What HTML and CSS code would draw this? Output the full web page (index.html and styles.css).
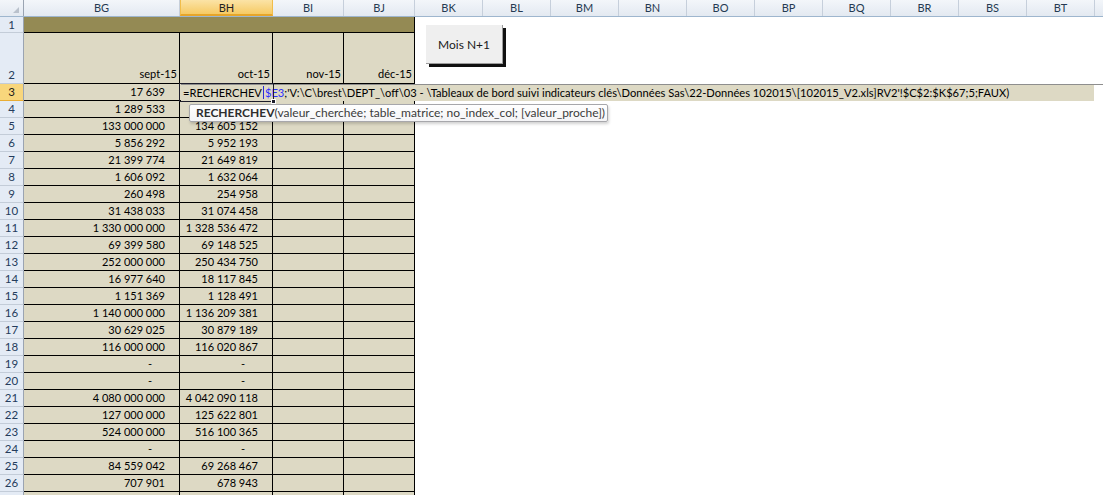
FILE: index.html
```html
<!DOCTYPE html>
<html lang="fr">
<head>
  <meta charset="UTF-8" />
  <title>Classeur - indicateurs</title>
  <link rel="stylesheet" href="styles.css">
</head>
<body>
  <div class="workbook">
    <!-- column letters -->
    <div class="colheads">
      <div class="corner"><svg width="8" height="8" viewBox="0 0 8 8"><path d="M7 1 L7 7 L1 7 Z" fill="#b9c1cc"/></svg></div>
      <div class="ch w-bg">BG</div>
      <div class="ch w-bh active">BH</div>
      <div class="ch w-bi">BI</div>
      <div class="ch w-bj">BJ</div>
      <div class="ch">BK</div>
      <div class="ch">BL</div>
      <div class="ch">BM</div>
      <div class="ch">BN</div>
      <div class="ch">BO</div>
      <div class="ch">BP</div>
      <div class="ch">BQ</div>
      <div class="ch">BR</div>
      <div class="ch">BS</div>
      <div class="ch">BT</div>
      <div class="ch"></div>
    </div>

    <div class="sheet">
      <div class="rh">1</div><div class="band"></div>
      <div class="rh">2</div><div class="c d">sept-15</div><div class="c d">oct-15</div><div class="c d">nov-15</div><div class="c d">déc-15</div>
      <div class="rh sel">3</div><div class="c n">17 639</div><div class="c"></div><div class="c"></div><div class="c"></div>
      <div class="rh">4</div><div class="c n">1 289 533</div><div class="c"></div><div class="c"></div><div class="c"></div>
      <div class="rh">5</div><div class="c n">133 000 000</div><div class="c n">134 605 152</div><div class="c"></div><div class="c"></div>
      <div class="rh">6</div><div class="c n">5 856 292</div><div class="c n">5 952 193</div><div class="c"></div><div class="c"></div>
      <div class="rh">7</div><div class="c n">21 399 774</div><div class="c n">21 649 819</div><div class="c"></div><div class="c"></div>
      <div class="rh">8</div><div class="c n">1 606 092</div><div class="c n">1 632 064</div><div class="c"></div><div class="c"></div>
      <div class="rh">9</div><div class="c n">260 498</div><div class="c n">254 958</div><div class="c"></div><div class="c"></div>
      <div class="rh">10</div><div class="c n">31 438 033</div><div class="c n">31 074 458</div><div class="c"></div><div class="c"></div>
      <div class="rh">11</div><div class="c n">1 330 000 000</div><div class="c n">1 328 536 472</div><div class="c"></div><div class="c"></div>
      <div class="rh">12</div><div class="c n">69 399 580</div><div class="c n">69 148 525</div><div class="c"></div><div class="c"></div>
      <div class="rh">13</div><div class="c n">252 000 000</div><div class="c n">250 434 750</div><div class="c"></div><div class="c"></div>
      <div class="rh">14</div><div class="c n">16 977 640</div><div class="c n">18 117 845</div><div class="c"></div><div class="c"></div>
      <div class="rh">15</div><div class="c n">1 151 369</div><div class="c n">1 128 491</div><div class="c"></div><div class="c"></div>
      <div class="rh">16</div><div class="c n">1 140 000 000</div><div class="c n">1 136 209 381</div><div class="c"></div><div class="c"></div>
      <div class="rh">17</div><div class="c n">30 629 025</div><div class="c n">30 879 189</div><div class="c"></div><div class="c"></div>
      <div class="rh">18</div><div class="c n">116 000 000</div><div class="c n">116 020 867</div><div class="c"></div><div class="c"></div>
      <div class="rh">19</div><div class="c dash">-</div><div class="c dash">-</div><div class="c"></div><div class="c"></div>
      <div class="rh">20</div><div class="c dash">-</div><div class="c dash">-</div><div class="c"></div><div class="c"></div>
      <div class="rh">21</div><div class="c n">4 080 000 000</div><div class="c n">4 042 090 118</div><div class="c"></div><div class="c"></div>
      <div class="rh">22</div><div class="c n">127 000 000</div><div class="c n">125 622 801</div><div class="c"></div><div class="c"></div>
      <div class="rh">23</div><div class="c n">524 000 000</div><div class="c n">516 100 365</div><div class="c"></div><div class="c"></div>
      <div class="rh">24</div><div class="c dash">-</div><div class="c dash">-</div><div class="c"></div><div class="c"></div>
      <div class="rh">25</div><div class="c n">84 559 042</div><div class="c n">69 268 467</div><div class="c"></div><div class="c"></div>
      <div class="rh">26</div><div class="c n">707 901</div><div class="c n">678 943</div><div class="c"></div><div class="c"></div>
      <div class="rh"></div><div class="c"></div><div class="c"></div><div class="c"></div><div class="c"></div>
    </div>

    <!-- floating things over the grid -->
    <button class="macro-btn">Mois N+1</button>

    <div class="editor">=RECHERCHEV<span class="caret"></span><span class="ref">$E3</span>;'V:\C\brest\DEPT_\off\03 - \Tableaux de bord suivi indicateurs clés\Données Sas\22-Données 102015\[102015_V2.xls]RV2'!$C$2:$K$67;5;FAUX)</div>
    <div class="selbox"><span class="handle"></span></div>

    <div class="fn-tip"><b>RECHERCHEV</b>(valeur_cherchée; table_matrice; no_index_col; [valeur_proche])</div>
  </div>
</body>
</html>
```

FILE: styles.css
```css
* {
  margin: 0;
  padding: 0;
  box-sizing: border-box;
}

html, body {
  height: 100%;
  background: #ffffff;
  overflow: hidden;
  font-family: 'Lato', 'Liberation Sans', sans-serif;
  font-size: 11px;
  color: #000;
}

.workbook {
  position: relative;
  width: 1103px;
  height: 495px;
  overflow: hidden;
}

/* Column header strip */
.colheads {
  display: flex;
  height: 17px;
  background: linear-gradient(#f3f6fa, #e3e9f1);
  border-bottom: 1px solid #9eb6ce;
}

.corner {
  flex: 0 0 24px;
  border-right: 1px solid #9aa4b2;
  display: flex;
  align-items: flex-end;
  justify-content: flex-end;
  padding: 0 3px 2px 0;
}

.ch {
  flex: 0 0 68px;
  border-right: 1px solid #c6cfdb;
  text-align: center;
  line-height: 16px;
  color: #253a52;
}

.ch.w-bg { flex-basis: 156px; }
.ch.w-bh { flex-basis: 93px; }
.ch.w-bi { flex-basis: 71px; }
.ch.w-bj { flex-basis: 71px; }

.ch.active {
  background: linear-gradient(#fbe3a6, #f6ca64);
  border-left: 1px solid #f1bd4a;
  border-right: 1px solid #f1bd4a;
  border-bottom: 2px solid #e6a52a;
  color: #1f1f1f;
}

/* Grid body */
.sheet {
  display: grid;
  grid-template-columns: 24px 156px 93px 71px 71px;
  grid-template-rows: 16px 51px repeat(25, 17px);
}

.rh {
  background: #e4ebf5;
  border-right: 1px solid #9aa4b2;
  border-bottom: 1px solid #c3ccd8;
  text-align: center;
  line-height: 16px;
  color: #243c5c;
  font-size: 11.5px;
}

.rh:nth-child(3) {
  display: flex;
  align-items: flex-end;
  justify-content: center;
}

.rh.sel {
  background: #f8d67c;
  border-bottom-color: #e9ad35;
  color: #1b1b1b;
}

.band {
  grid-column: 2 / 6;
  background: #948a54;
  border-bottom: 1px solid #000;
  border-right: 1px solid #000;
}

.c {
  background: #ddd9c4;
  border-right: 1px solid #000;
  border-bottom: 1px solid #000;
  line-height: 16px;
  white-space: nowrap;
  overflow: hidden;
  text-align: right;
}

.c.n { padding-right: 14px; }
.c.dash { padding-right: 27px; }

.c.d {
  display: flex;
  align-items: flex-end;
  justify-content: flex-end;
  padding: 0 2px 1px 0;
}

/* Form button drawn on the sheet */
.macro-btn {
  position: absolute;
  left: 425px;
  top: 24px;
  width: 77px;
  height: 39px;
  background: #efefef;
  border: none;
  border-top: 1px solid #ffffff;
  border-left: 1px solid #ffffff;
  box-shadow: 1px 1px 0 #9c9c9c, 4px 4px 0 #111;
  font-family: inherit;
  font-size: 12px;
  color: #1a1a1a;
}

/* in-cell editor for BH3 */
.editor {
  position: absolute;
  left: 181px;
  top: 84px;
  width: 922px;
  height: 17px;
  background: linear-gradient(90deg, #ddd9c4 913px, #ffffff 913px);
  border-top: 1px solid #8e8e8e;
  padding-left: 2px;
  line-height: 15px;
  font-size: 11.15px;
  white-space: nowrap;
}

.editor .caret {
  display: inline-block;
  width: 1px;
  height: 13px;
  margin: 0 1px;
  vertical-align: -2px;
  background: #2b2bd6;
}

.editor .ref {
  color: #2f2fff;
}

.selbox {
  position: absolute;
  left: 179px;
  top: 83px;
  width: 95px;
  height: 19px;
  border: 1px solid #1d1d2b;
  pointer-events: none;
}

.selbox .handle {
  position: absolute;
  right: -3px;
  bottom: -3px;
  width: 5px;
  height: 5px;
  background: #1d1d2b;
  border: 1px solid #fff;
}

/* function argument tooltip */
.fn-tip {
  position: absolute;
  left: 189px;
  top: 104px;
  width: 419px;
  height: 18px;
  background: linear-gradient(#ffffff, #f4f4f6);
  border: 1px solid #a7a7ab;
  border-radius: 2px;
  box-shadow: 1px 2px 3px rgba(0, 0, 0, 0.18);
  padding-left: 6px;
  line-height: 15px;
  font-size: 12px;
  color: #3b3b3b;
  white-space: nowrap;
}

.fn-tip b {
  color: #2e2e2e;
}
```
